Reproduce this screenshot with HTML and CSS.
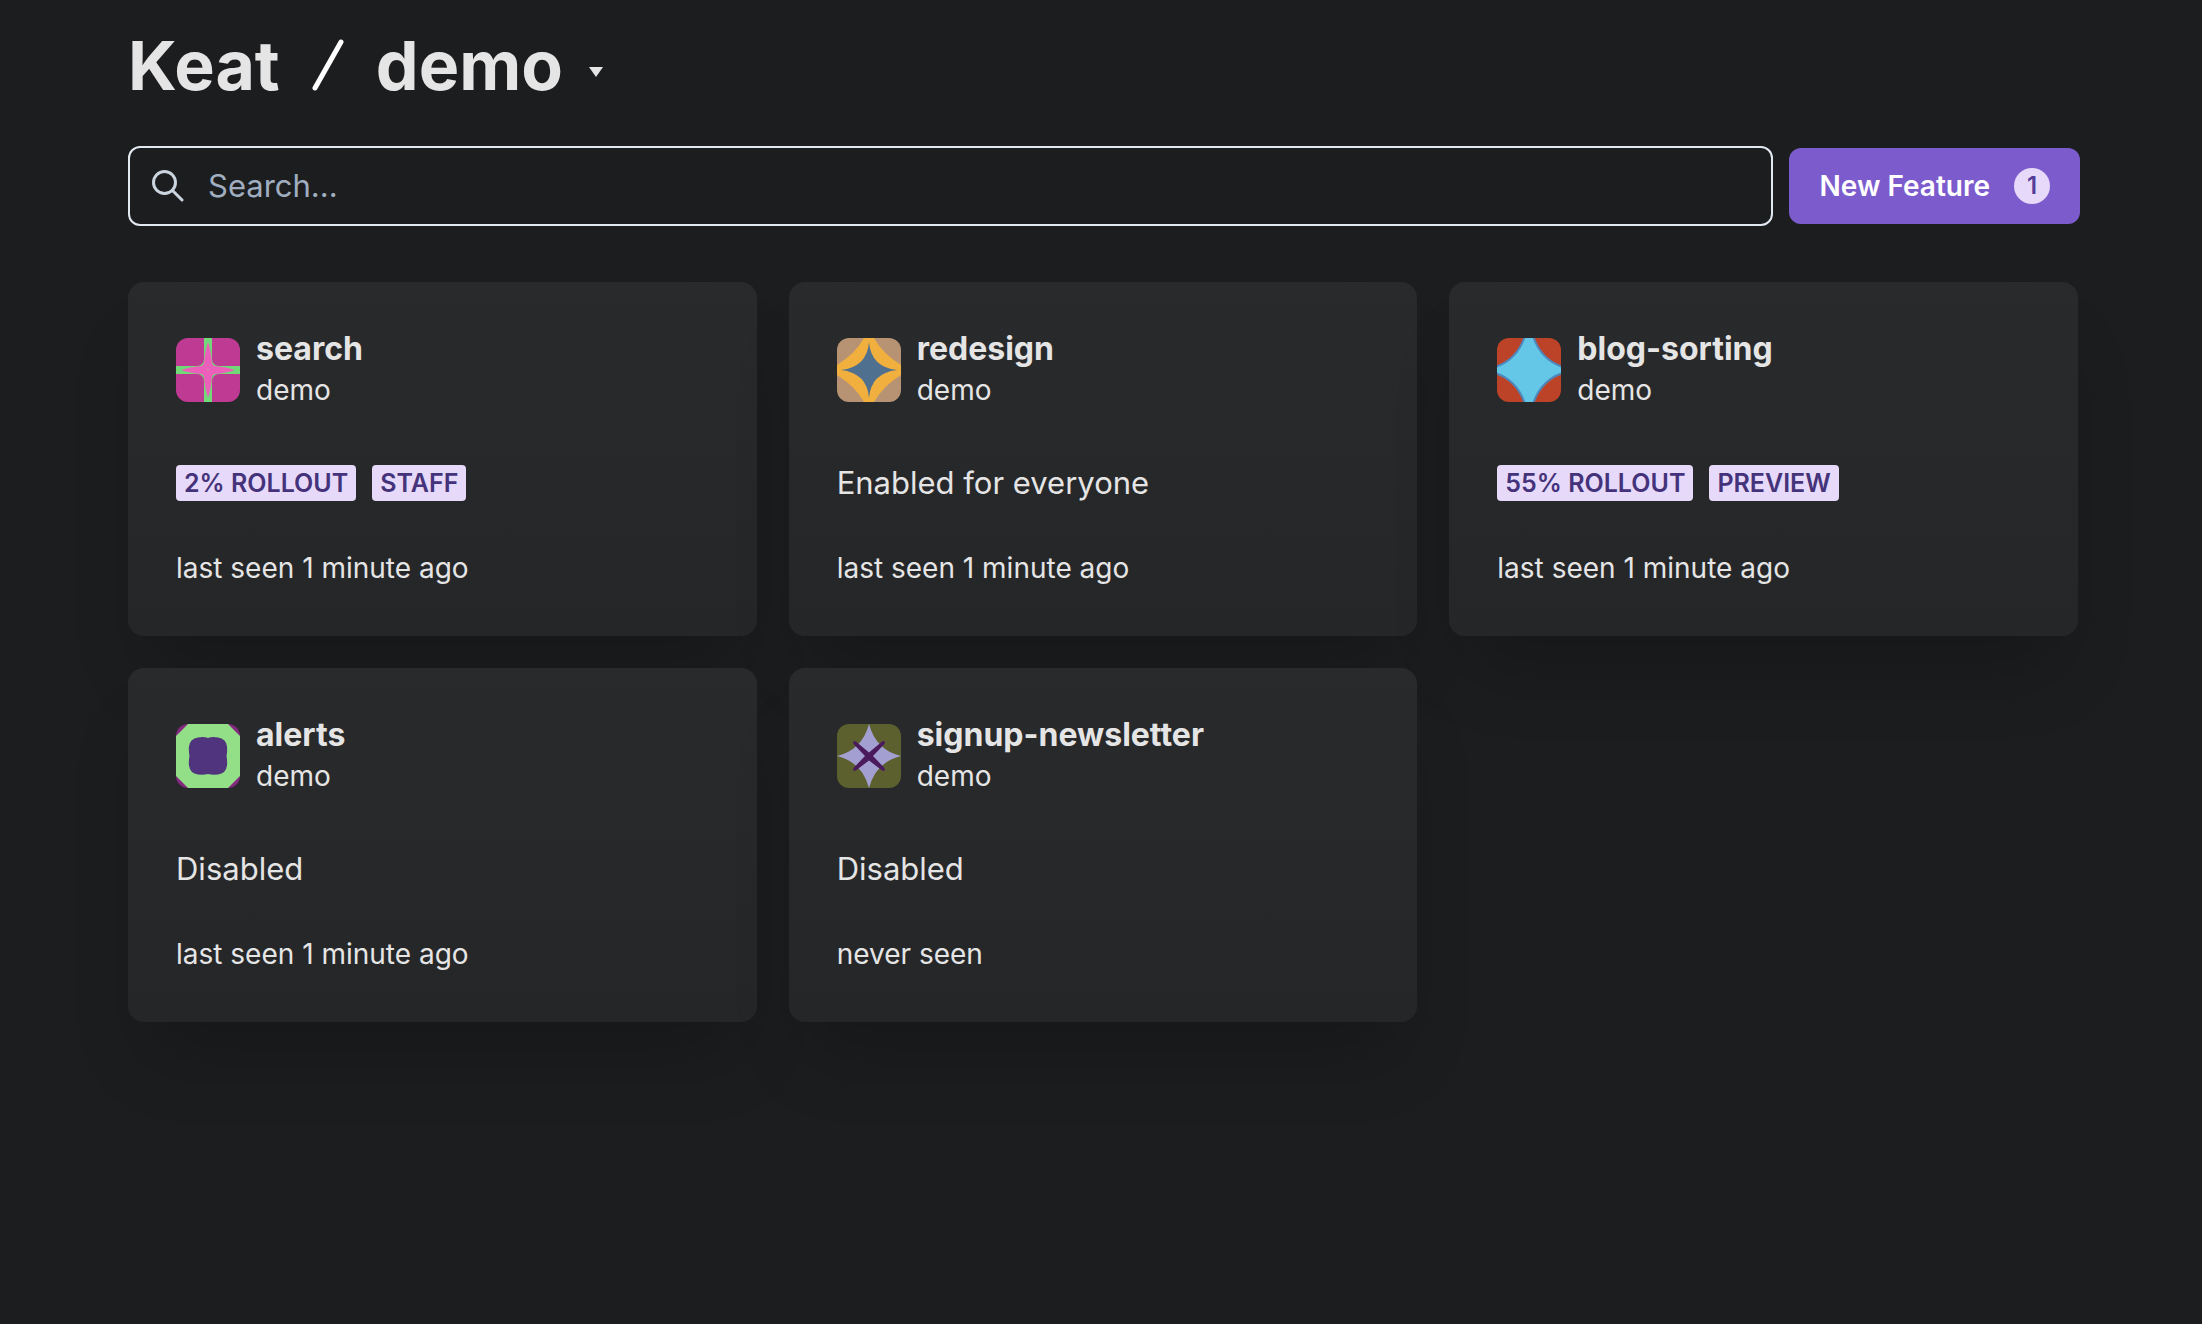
FILE: index.html
```html
<!DOCTYPE html>
<html lang="en">
<head>
<meta charset="utf-8">
<meta name="viewport" content="width=device-width, initial-scale=1">
<title>Keat / demo</title>
<link rel="stylesheet" href="styles.css">
</head>
<body>
<header class="header">
  <h1 class="title">Keat</h1>
  <svg class="slash" viewBox="0 0 32 52" aria-hidden="true"><path d="M29 3 3 49"/></svg>
  <button class="project" type="button">demo
    <svg class="caret" viewBox="0 0 14 10" aria-hidden="true"><path d="M0 0h14L7 10z"/></svg>
  </button>
</header>
<main>
  <form class="toolbar">
    <label class="search">
      <svg class="search-icon" viewBox="0 0 32 32" aria-hidden="true"><circle cx="12.500" cy="12.500" r="11"/><path d="m20.500 20.500 9.500 9.500"/></svg>
      <input class="search-input" type="search" placeholder="Search..." aria-label="Search">
    </label>
    <button class="new-feature" type="button">New Feature <span class="count">1</span></button>
  </form>
  <section class="grid">
    <article class="card">
      <div class="card-head">
        <svg class="avatar" viewBox="0 0 64 64" aria-hidden="true">
          <path fill="#bf3a92" d="M0 0h64v64H0z"/>
          <path fill="#6fda77" d="M28 0h8v21q0 3 2 5t5 2h21v8H43q-3 0-5 2t-2 5v21h-8V43q0-3-2-5t-5-2H0v-8h21q3 0 5-2t2-5z"/>
          <path fill="#ec60bb" d="M32 4q3 9 4 21l1 2 2 1q12 1 20 4-8 3-20 4l-2 1-1 2q-1 12-4 21-3-9-4-21l-1-2-2-1q-12-1-20-4 8-3 20-4l2-1 1-2q1-12 4-21z"/>
          <path fill="#df7cae" d="M31 31h2v2h-2z"/>
        </svg>
        <div><h2 class="name">search</h2><p class="sub">demo</p></div>
      </div>
      <div class="state"><span class="tag">2% ROLLOUT</span><span class="tag">STAFF</span></div>
      <p class="seen">last seen 1 minute ago</p>
    </article>
    <article class="card">
      <div class="card-head">
        <svg class="avatar" viewBox="0 0 64 64" aria-hidden="true">
          <path fill="#b79373" d="M0 0h64v64H0z"/>
          <path fill="#f1b03e" d="M27 0h10q9 16 27 27v10q-18 11-27 27H27Q18 48 0 37V27Q18 16 27 0z"/>
          <path fill="#50708f" d="M32 4q2 25 28 28-26 3-28 28-2-25-28-28 26-3 28-28z"/>
        </svg>
        <div><h2 class="name">redesign</h2><p class="sub">demo</p></div>
      </div>
      <p class="state">Enabled for everyone</p>
      <p class="seen">last seen 1 minute ago</p>
    </article>
    <article class="card">
      <div class="card-head">
        <svg class="avatar" viewBox="0 0 64 64" aria-hidden="true">
          <path fill="#bc4328" d="M0 0h64v64H0z"/>
          <path fill="#65c7e8" stroke="#4c88bd" stroke-width="2" d="M28-2h8q8 24 30 31v6q-22 7-30 31h-8Q20 42-2 35v-6Q20 22 28-2z"/>
        </svg>
        <div><h2 class="name">blog-sorting</h2><p class="sub">demo</p></div>
      </div>
      <div class="state"><span class="tag">55% ROLLOUT</span><span class="tag">PREVIEW</span></div>
      <p class="seen">last seen 1 minute ago</p>
    </article>
    <article class="card">
      <div class="card-head">
        <svg class="avatar" viewBox="0 0 64 64" aria-hidden="true">
          <path fill="#84277f" d="M0 0h64v64H0z"/>
          <path fill="#93df87" d="M12 0h40l12 12v40L52 64H12L0 52V12z"/>
          <path fill="#50347e" d="M22 13.500q6-1 10 .5 4-1.500 10-.5 8 1 9 9 .5 5-.5 9.500 1 4.500.5 9.500-1 8-9 9-6 .5-10-.5-4 1-10 .5-8-1-9-9-.5-5 .5-9.500-1-4.500-.5-9.500 1-8 9-9z"/>
        </svg>
        <div><h2 class="name">alerts</h2><p class="sub">demo</p></div>
      </div>
      <p class="state">Disabled</p>
      <p class="seen">last seen 1 minute ago</p>
    </article>
    <article class="card">
      <div class="card-head">
        <svg class="avatar" viewBox="0 0 64 64" aria-hidden="true">
          <path fill="#5c602e" d="M0 0h64v64H0z"/>
          <path fill="#a3a0d1" d="M32 0q7 26 32 32-25 6-32 32-7-26-32-32Q25 26 32 0z"/>
          <path fill="#4b1a5d" d="M16.500 17.500q1-1 3 .5L32 28.500 44.500 18q2-1.500 3-.5t-.5 3L36 32l11 11.500q1.500 2 .5 3t-3-.5L32 36.500 19.500 46q-2 1.500-3 .5t.5-3L28 32 17 20.500q-1.500-2-.5-3z"/>
        </svg>
        <div><h2 class="name">signup-newsletter</h2><p class="sub">demo</p></div>
      </div>
      <p class="state">Disabled</p>
      <p class="seen">never seen</p>
    </article>
  </section>
</main>
</body>
</html>
```
FILE: styles.css
```css
* { box-sizing: border-box; }
body {
  margin: 0;
  min-height: 100vh;
  background: #1c1d1f;
  color: #e5e5e5;
  font-family: Inter, "Liberation Sans", sans-serif;
  font-size: 28px;
  line-height: 42px;
}
h1, h2, p { margin: 0; }
button, input { font: inherit; color: inherit; border: 0; margin: 0; }
.header {
  display: flex;
  align-items: center;
  padding: 20px 124px 0 128px;
  height: 110px;
}
.title, .project { font-size: 68px; font-weight: 700; line-height: 90px; }
.slash { width: 32px; height: 52px; margin: 0 32px; }
.slash path { stroke: #fff; stroke-width: 5; stroke-linecap: round; }
.project {
  display: flex;
  align-items: center;
  gap: 26px;
  padding: 0;
  background: none;
}
.caret { width: 14px; height: 10px; margin-top: 14px; fill: #e5e5e5; }
.toolbar {
  display: flex;
  align-items: center;
  gap: 16px;
  padding: 36px 122px 56px 128px;
}
.search {
  display: flex;
  align-items: center;
  flex: 1;
  gap: 24px;
  height: 80px;
  padding: 0 22px;
  border: 2px solid #e2e8f0;
  border-radius: 12px;
}
.search-icon { width: 32px; height: 32px; fill: none; stroke: #cbd5e0; stroke-width: 3; stroke-linecap: round; }
.search-input { flex: 1; min-width: 0; padding: 0; background: none; outline: 0; font-size: 31px; appearance: none; }
.search-input::placeholder { color: #a0aec0; opacity: 1; }
.new-feature {
  display: flex;
  align-items: center;
  gap: 24px;
  height: 76px;
  padding: 0 30px;
  border-radius: 12px;
  background: #7c5ccd;
  color: #fff;
  font-weight: 600;
  white-space: nowrap;
}
.count {
  width: 36px;
  height: 36px;
  border-radius: 50%;
  background: #e6d9f9;
  color: #553c9a;
  font-size: 24px;
  line-height: 36px;
  text-align: center;
}
.grid {
  display: grid;
  grid-template-columns: repeat(3, minmax(0, 1fr));
  gap: 32px;
  padding: 0 124px 128px 128px;
}
.card {
  min-height: 354px;
  padding: 47px 48px;
  border-radius: 16px;
  background: linear-gradient(#292a2c, #252628);
  box-shadow: 0 50px 70px -20px rgba(0, 0, 0, .2);
}
.card-head { display: flex; align-items: center; gap: 16px; }
.avatar { width: 64px; height: 64px; border-radius: 12px; }
.name { font-size: 32px; font-weight: 700; line-height: 40px; }
.sub { line-height: 42px; }
.state { display: flex; align-items: center; gap: 16px; height: 48px; margin-top: 48px; font-size: 31px; line-height: 48px; }
.tag {
  padding: 0 8px;
  border-radius: 4px;
  background: #e6d9f9;
  color: #44337a;
  font-size: 25px;
  font-weight: 600;
  line-height: 36px;
}
.seen { margin-top: 40px; }
```
